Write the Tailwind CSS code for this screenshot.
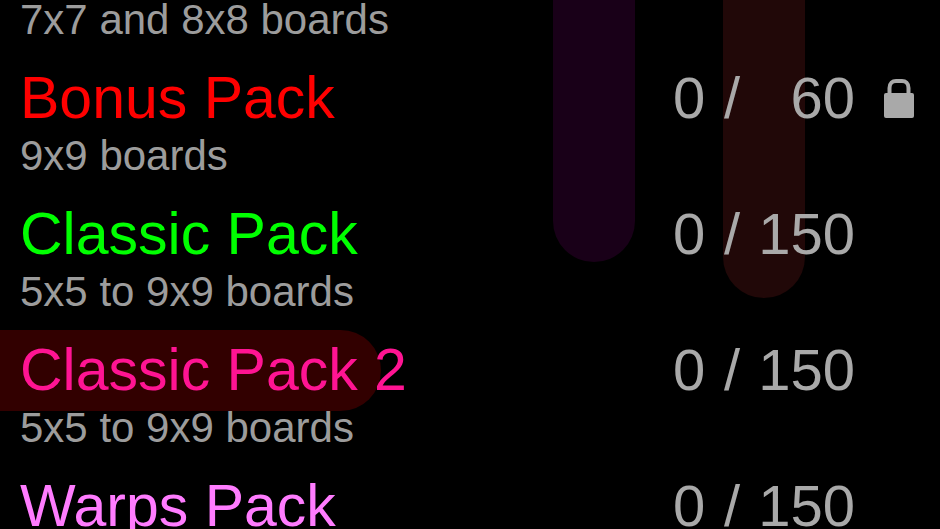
<!DOCTYPE html>
<html lang="en">
<head>
    <meta charset="UTF-8">
    <meta name="viewport" content="width=device-width, initial-scale=1.0">
    <title>Level Packs</title>
    <script src="https://cdn.jsdelivr.net/npm/@tailwindcss/browser@4"></script>
</head>
<body class="bg-black font-['Liberation_Sans',Arial,sans-serif]">

    <main class="relative isolate h-screen overflow-hidden bg-black">

        <!-- Background pipes -->
        <div class="absolute top-0 right-[305px] -z-10 h-[262px] w-[82px] rounded-b-full bg-[#190018]"></div>
        <div class="absolute top-0 right-[135px] -z-10 h-[298px] w-[82px] rounded-b-full bg-[#210808]"></div>

        <!-- Pack list -->
        <ul class="text-[59px] leading-[80px] text-[#a9a9a9]">
            <li class="pt-[2px] pb-5">
                <p class="pl-5 text-[42px] leading-[36px] text-[#9c9c9c]">7x7 and 8x8 boards</p>
            </li>
            <li>
                <button type="button" class="block w-full pb-5 text-left">
                    <span class="flex pl-5">
                        <span class="flex-1 text-[#ff0000]">Bonus Pack</span>
                        <span class="flex text-[58px]">
                            <span class="w-[33px]">0</span>
                            <span class="w-[52px] text-center">/</span>
                            <span class="w-[97px] text-right">60</span>
                        </span>
                        <span class="flex w-[85px] items-center justify-center pl-[3px]">
                            <svg class="h-[42px] w-[30px]" viewBox="0 0 30 42" role="img" aria-label="Locked">
                                <path d="M5.500 18V11C5.500 6 8.500 4 12 4H18C21.500 4 24.500 6 24.500 11V18" fill="none" stroke="#a9a9a9" stroke-width="4"/>
                                <rect x="0" y="16" width="30" height="25" rx="2" fill="#a9a9a9"/>
                            </svg>
                        </span>
                    </span>
                    <span class="block pl-5 text-[42px] leading-[36px] text-[#9c9c9c]">9x9 boards</span>
                </button>
            </li>
            <li>
                <button type="button" class="block w-full pb-5 text-left">
                    <span class="flex pr-[85px] pl-5">
                        <span class="flex-1 text-[#00ff00]">Classic Pack</span>
                        <span class="flex text-[58px]">
                            <span class="w-[33px]">0</span>
                            <span class="w-[52px] text-center">/</span>
                            <span class="w-[97px] text-right">150</span>
                        </span>
                    </span>
                    <span class="block pl-5 text-[42px] leading-[36px] text-[#9c9c9c]">5x5 to 9x9 boards</span>
                </button>
            </li>
            <li>
                <button type="button" class="relative block w-full pb-5 text-left">
                    <span class="absolute top-0 left-0 -z-10 h-[81px] w-[381px] rounded-r-full bg-[#320000]"></span>
                    <span class="flex pr-[85px] pl-5">
                        <span class="flex-1 text-[#ff1493]">Classic Pack 2</span>
                        <span class="flex text-[58px]">
                            <span class="w-[33px]">0</span>
                            <span class="w-[52px] text-center">/</span>
                            <span class="w-[97px] text-right">150</span>
                        </span>
                    </span>
                    <span class="block pl-5 text-[42px] leading-[36px] text-[#9c9c9c]">5x5 to 9x9 boards</span>
                </button>
            </li>
            <li>
                <button type="button" class="block w-full pb-5 text-left">
                    <span class="flex pr-[85px] pl-5">
                        <span class="flex-1 text-[#ff7cff]">Warps Pack</span>
                        <span class="flex text-[58px]">
                            <span class="w-[33px]">0</span>
                            <span class="w-[52px] text-center">/</span>
                            <span class="w-[97px] text-right">150</span>
                        </span>
                    </span>
                </button>
            </li>
        </ul>
    </main>

</body>
</html>
